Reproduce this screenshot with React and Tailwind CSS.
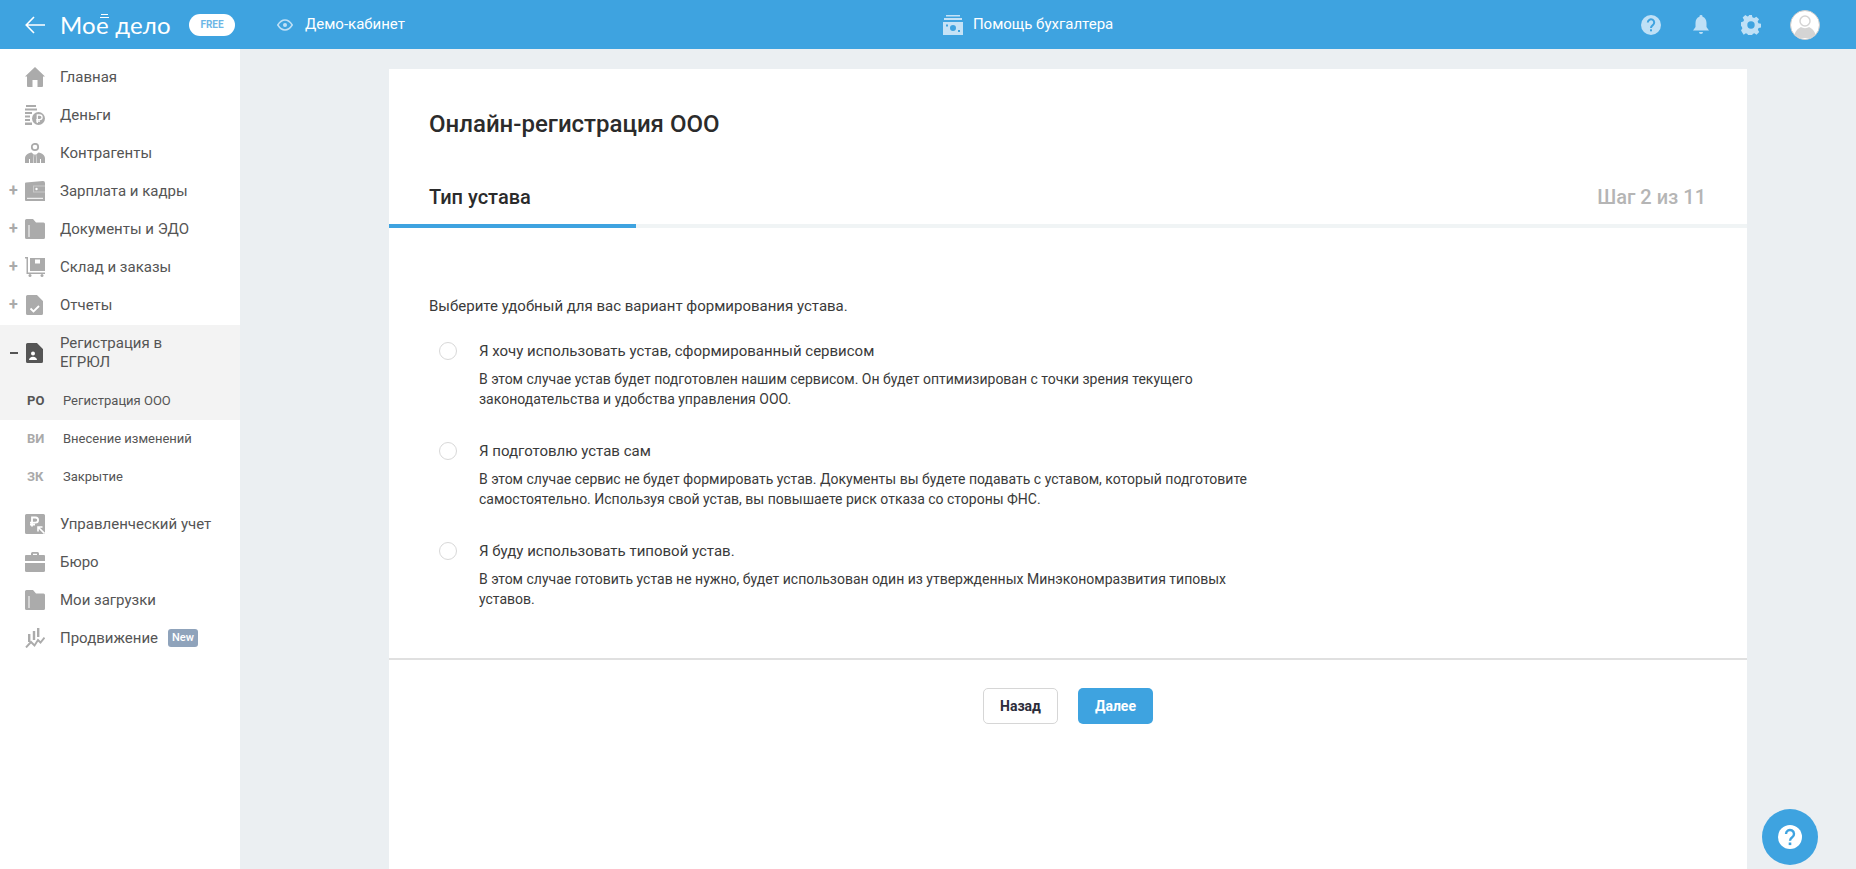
import React from "react";

const G = "#ababab";
const Ic = ({ children, fill = G, w = 20, h = 20 }) => (
  <svg width={w} height={h} viewBox="0 0 20 20" fill={fill} className="shrink-0">{children}</svg>
);

const Home = () => <Ic><path d="M10 0 20 9.500 18 9.500 18 19a1 1 0 0 1-1 1H12.500V13H7.500V20H3a1 1 0 0 1-1-1V9.500H0Z" /></Ic>;
const Money = () => (
  <Ic>
    <path d="M1 0h10v2H1zM0 3.500h12v2H0zM0 7h7v2H0zM0 10.500h5v2H0zM0 14h5v2H0zM0 17.500h7V20H0z" />
    <circle cx="13.500" cy="13.500" r="6.500" />
    <path d="M12.300 18v-8h2.500a2.300 2.300 0 0 1 0 4.600h-3.600M11.200 16.200h3.800" fill="none" stroke="#fff" strokeWidth="1.300" />
  </Ic>
);
const Person = () => (
  <Ic>
    <circle cx="10" cy="4" r="3.200" fill="none" stroke={G} strokeWidth="1.800" />
    <path d="M0 20v-4.500C0 12 3 10 6.500 9.500L8.800 11.500 8.200 20ZM20 20v-4.500c0-3.500-3-5.500-6.500-6L11.200 11.500 11.800 20ZM9.200 11.500h1.600l.5 8.500H8.700Z" />
    <path d="M4.500 16v4M15.500 16v4" stroke="#fff" strokeWidth="1" />
  </Ic>
);
const Wallet = () => (
  <Ic>
    <path d="M1 1.500 18 0a2 2 0 0 1 2 2v18H1a1 1 0 0 1-1-1V2.500a1 1 0 0 1 1-1Z" />
    <path d="M2 17.300h16" stroke="#fff" strokeWidth="1" />
    <path d="M8 4.500h12v7H8z" fill="#c9c9c9" />
    <path d="M9 5.500h11v5H9z" fill={G} />
    <circle cx="11.500" cy="8" r="1.200" fill="#fff" />
  </Ic>
);
const Folder = () => (
  <Ic>
    <path d="M0 1.500A1.500 1.500 0 0 1 1.500 0H8l3 3.500h7.500A1.500 1.500 0 0 1 20 5v13.500a1.500 1.500 0 0 1-1.500 1.500h-17A1.500 1.500 0 0 1 0 18.500ZM3.500 6v12h1V6Z" fillRule="evenodd" />
  </Ic>
);
const Cart = () => (
  <Ic>
    <path d="M0 0h3v15.500h17V17H1.500V1.500H0Z" />
    <path d="M5 1h15v13H5zM10 2.500v4h5v-4z" fillRule="evenodd" />
    <circle cx="5" cy="18.500" r="1.500" /><circle cx="17" cy="18.500" r="1.500" />
  </Ic>
);
const Report = () => (
  <Ic>
    <path d="M2.500 0H12l6 6v12.500a1.500 1.500 0 0 1-1.500 1.500h-14A1.500 1.500 0 0 1 1 18.500V1.500A1.500 1.500 0 0 1 2.500 0Z" />
    <path d="M12.500 0 18 5.500V0Z" fill="#fff" />
    <path d="M5.500 13.500 8.500 16.500 14 11" fill="none" stroke="#fff" strokeWidth="1.800" />
  </Ic>
);
const Reg = () => (
  <Ic fill="#555">
    <path d="M2.500 0H12l6 6v12.500a1.500 1.500 0 0 1-1.500 1.500h-14A1.500 1.500 0 0 1 1 18.500V1.500A1.500 1.500 0 0 1 2.500 0Z" />
    <path d="M12.500 0 18 5.500V0Z" fill="#f3f3f3" />
    <circle cx="8" cy="10.500" r="2" fill="#fff" />
    <path d="M4 17c0-2 1.800-3.300 4-3.300S12 15 12 17Z" fill="#fff" />
  </Ic>
);
const Ruble = () => (
  <Ic>
    <path d="M1.500 0h17A1.500 1.500 0 0 1 20 1.500v17a1.500 1.500 0 0 1-1.500 1.500h-17A1.500 1.500 0 0 1 0 18.500V1.500A1.500 1.500 0 0 1 1.500 0Z" />
    <path d="M7 12.500V3.500h3.500a2.600 2.600 0 0 1 0 5.200H5M5 10.700h5" fill="none" stroke="#fff" strokeWidth="1.800" />
    <path d="M19.500 19.500 13.500 13.500M13 17.500v-4.500h4.500" fill="none" stroke="#fff" strokeWidth="1.600" />
  </Ic>
);
const Case = () => (
  <Ic>
    <path d="M6 3V1.500A1.500 1.500 0 0 1 7.500 0h5A1.500 1.500 0 0 1 14 1.500V3h5a1 1 0 0 1 1 1v5H0V4a1 1 0 0 1 1-1ZM8 1.800V3h4V1.800Z" fillRule="evenodd" />
    <path d="M0 11h20v7.500a1.500 1.500 0 0 1-1.500 1.500h-17A1.500 1.500 0 0 1 0 18.500Z" />
  </Ic>
);
const Chart = () => (
  <Ic>
    <path d="M3 6h2.400v8H3zM7.800 3h2.400v9H7.800zM12 0h2.400v9H12z" />
    <path d="M1 19.500 6 14 9.500 17.500 13 12 15.500 14.500 19.500 9.500" fill="none" stroke={G} strokeWidth="1.900" />
  </Ic>
);

const rows1 = [
  ["Главная", Home],
  ["Деньги", Money],
  ["Контрагенты", Person],
  ["Зарплата и кадры", Wallet, true],
  ["Документы и ЭДО", Folder, true],
  ["Склад и заказы", Cart, true],
  ["Отчеты", Report, true],
];

const Row = ({ label, Icon, plus, children }) => (
  <div className="flex h-[38px] items-center">
    <span className="w-[25px] shrink-0 pl-[9px] text-[16px] font-bold leading-none text-[#aaa]">{plus ? "+" : ""}</span>
    <Icon />
    <span className="ml-[15px] text-[15px] text-[#555]">{label}</span>
    {children}
  </div>
);

const Sub = ({ abbr, label, active }) => (
  <div className={`flex items-center ${active ? "h-[39px] text-[#555]" : "h-[38px] text-[#aaa]"}`}>
    <span className="ml-[27px] w-[36px] text-[13px] font-bold">{abbr}</span>
    <span className="text-[13px] text-[#555]">{label}</span>
  </div>
);

const options = [
  ["Я хочу использовать устав, сформированный сервисом", "В этом случае устав будет подготовлен нашим сервисом. Он будет оптимизирован с точки зрения текущего законодательства и удобства управления ООО."],
  ["Я подготовлю устав сам", "В этом случае сервис не будет формировать устав. Документы вы будете подавать с уставом, который подготовите самостоятельно. Используя свой устав, вы повышаете риск отказа со стороны ФНС."],
  ["Я буду использовать типовой устав.", "В этом случае готовить устав не нужно, будет использован один из утвержденных Минэкономразвития типовых уставов."],
];

export default function App() {
  return (
    <div className="relative flex h-[869px] flex-col overflow-hidden bg-[#ebeff2] font-['Roboto',sans-serif]">
      <header className="flex h-[49px] shrink-0 items-center bg-[#3ea3e0] text-white">
        <svg width="20" height="18" viewBox="0 0 20 18" fill="none" stroke="#fff" strokeWidth="1.600" className="ml-[25px]">
          <path d="M20 9H1.500M9 1 1.200 9 9 17" />
        </svg>
        <div className="relative ml-[15px] w-[113px] whitespace-nowrap font-['Lato',sans-serif] text-[24px] font-normal leading-none tracking-[0.2px]">
          Мое дело
          <span className="absolute left-[41px] top-[1px] h-[1.500px] w-[7px] bg-white" />
          <span className="absolute left-[40px] top-[4px] h-[1.500px] w-[9px] bg-white" />
        </div>
        <span className="ml-[16px] flex h-[22px] w-[46px] items-center justify-center rounded-full bg-white text-[10px] font-bold text-[#6cb6e6]">FREE</span>
        <svg width="16" height="12" viewBox="0 0 16 12" fill="none" stroke="#bfe0f6" strokeWidth="1.500" className="ml-[42px]">
          <path d="M.8 6C3 2.500 5.400 1 8 1s5 1.500 7.200 5C13 9.500 10.600 11 8 11S3 9.500.8 6Z" />
          <circle cx="8" cy="6" r="2" fill="#bfe0f6" stroke="none" />
        </svg>
        <span className="ml-[12px] text-[15px]">Демо-кабинет</span>
        <svg width="20" height="20" viewBox="0 0 20 20" fill="#c5e2f6" className="ml-[538px]">
          <path d="M3 0h14v1.500H3zM1 3h18v2H1z" />
          <path d="M0 7h20v13H0zM10 10a3 3 0 1 0 0 6 3 3 0 0 0 0-6ZM3 9.500v2h2v-2zM15 15v2h2v-2z" fillRule="evenodd" />
        </svg>
        <span className="ml-[10px] text-[15px]">Помощь бухгалтера</span>
        <svg width="20" height="20" viewBox="0 0 20 20" className="ml-[528px]">
          <circle cx="10" cy="10" r="10" fill="#bfe0f6" />
          <path d="M6.800 7.500a3.200 3.200 0 1 1 5 2.700c-1.200.8-1.800 1.300-1.800 2.800" fill="none" stroke="#3ea3e0" strokeWidth="2" />
          <rect x="9" y="14.300" width="2" height="2" fill="#3ea3e0" />
        </svg>
        <svg width="16" height="20" viewBox="0 0 16 20" fill="#bfe0f6" className="ml-[32px]">
          <path d="M8 0a1.500 1.500 0 0 1 1.500 1.700C12 2.500 13.500 4.800 13.500 8v4l2.500 3.500H0L2.500 12V8C2.500 4.800 4 2.500 6.500 1.700A1.500 1.500 0 0 1 8 0ZM6 17h4a2 2 0 0 1-4 0Z" />
        </svg>
        <svg width="20" height="20" viewBox="0 0 20 20" className="ml-[32px]">
          <path d="M8 0h4l.6 2.700 1.900.8L16.900 2l2.900 2.900-1.500 2.400.8 1.900 2.900.6v4l-2.700.6-.8 1.900 1.500 2.400-2.900 2.900-2.400-1.500-1.900.8-.8 2.700H8l-.6-2.700-1.900-.8-2.400 1.500L.2 17.100l1.500-2.400-.8-1.900L0 12V8l2.700-.6.800-1.900L2 3 4.900.2l2.400 1.500 1.900-.8Z" transform="scale(.92) translate(-.2 -.2)" fill="#bfe0f6" />
          <circle cx="10" cy="10" r="3.700" fill="#3ea3e0" />
        </svg>
        <div className="ml-[29px] flex h-[30px] w-[30px] items-center justify-center overflow-hidden rounded-full border border-[#ccc] bg-white">
          <svg width="28" height="28" viewBox="0 0 28 28">
            <circle cx="14" cy="10" r="5" fill="none" stroke="#d4d4d4" strokeWidth="1.500" />
            <path d="M3 27c0-7 5-10 7-11 2 1.500 6 1.500 8 0 2 1 7 4 7 11Z" fill="#d4d4d4" />
          </svg>
        </div>
      </header>

      <div className="flex min-h-0 flex-1">
        <aside className="w-[240px] shrink-0 bg-white pt-[9px]">
          {rows1.map(([label, Icon, plus]) => (
            <Row key={label} label={label} Icon={Icon} plus={plus} />
          ))}
          <div className="mt-px bg-[#f3f3f3]">
            <div className="flex h-[56px] items-center">
              <span className="ml-[10px] h-[2px] w-[8px] bg-[#555]" />
              <span className="ml-[7px] flex"><Reg /></span>
              <span className="ml-[15px] w-[130px] text-[15px] leading-[19px] text-[#555]">Регистрация в ЕГРЮЛ</span>
            </div>
            <Sub abbr="РО" label="Регистрация ООО" active />
          </div>
          <Sub abbr="ВИ" label="Внесение изменений" />
          <Sub abbr="ЗК" label="Закрытие" />
          <div className="h-[9px]" />
          <Row label="Управленческий учет" Icon={Ruble} />
          <Row label="Бюро" Icon={Case} />
          <Row label="Мои загрузки" Icon={Folder} />
          <Row label="Продвижение" Icon={Chart}>
            <span className="ml-[10px] flex h-[18px] w-[30px] items-center justify-center rounded-[3px] bg-[#8fa3bb] text-[11px] font-medium text-white">New</span>
          </Row>
        </aside>

        <main className="min-w-0 flex-1 pl-[149px] pr-[109px] pt-[20px]">
          <section className="h-full bg-white">
            <h1 className="pl-[40px] pr-[41px] pt-[41px] text-[24px] font-medium leading-[28px] text-[#2b2b2b]">Онлайн-регистрация ООО</h1>
            <div className="mt-[46px] flex items-center justify-between pl-[40px] pr-[41px]">
              <span className="text-[20px] font-medium leading-[26px] text-[#2b2b2b]">Тип устава</span>
              <span className="text-[20px] font-medium leading-[26px] text-[#b5b5b5]">Шаг 2 из 11</span>
            </div>
            <div className="mt-[14px] h-[4px] bg-[#f0f4f5]">
              <div className="h-full w-[247px] bg-[#3ea3e0]" />
            </div>
            <p className="mt-[68px] pl-[40px] pr-[41px] text-[15px] leading-[20px] text-[#3a3a3a]">Выберите удобный для вас вариант формирования устава.</p>
            <div className="mt-[25px] flex flex-col gap-[32px] pl-[50px]">
              {options.map(([t, d]) => (
                <div key={t} className="flex gap-[22px]">
                  <span className="mt-px h-[18px] w-[18px] shrink-0 rounded-full border border-[#d8d8d8] bg-white" />
                  <div className="w-[790px]">
                    <div className="text-[15px] leading-[20px] text-[#3a3a3a]">{t}</div>
                    <div className="mt-[8px] text-[14px] leading-[20px] text-[#3a3a3a]">{d}</div>
                  </div>
                </div>
              ))}
            </div>
            <div className="mt-[49px] border-t-2 border-[#e0e0e0]" />
            <div className="mt-[28px] flex justify-center gap-[20px]">
              <button className="h-[36px] w-[75px] rounded-[5px] border border-[#d6d6d6] bg-white text-[14px] font-bold text-[#2c2c3a]">Назад</button>
              <button className="h-[36px] w-[75px] rounded-[5px] bg-[#3ea3e0] text-[14px] font-bold text-white">Далее</button>
            </div>
          </section>
        </main>
      </div>

      <div className="absolute bottom-[4px] right-[38px] flex h-[56px] w-[56px] items-center justify-center rounded-full bg-[#3ea3e0]">
        <svg width="24" height="24" viewBox="0 0 24 24">
          <circle cx="12" cy="12" r="12" fill="#fff" />
          <path d="M8 9a4 4 0 1 1 6.200 3.300c-1.500 1-2.200 1.600-2.200 3.400" fill="none" stroke="#3ea3e0" strokeWidth="2.400" />
          <rect x="10.700" y="17.500" width="2.600" height="2.600" fill="#3ea3e0" />
        </svg>
      </div>
    </div>
  );
}
